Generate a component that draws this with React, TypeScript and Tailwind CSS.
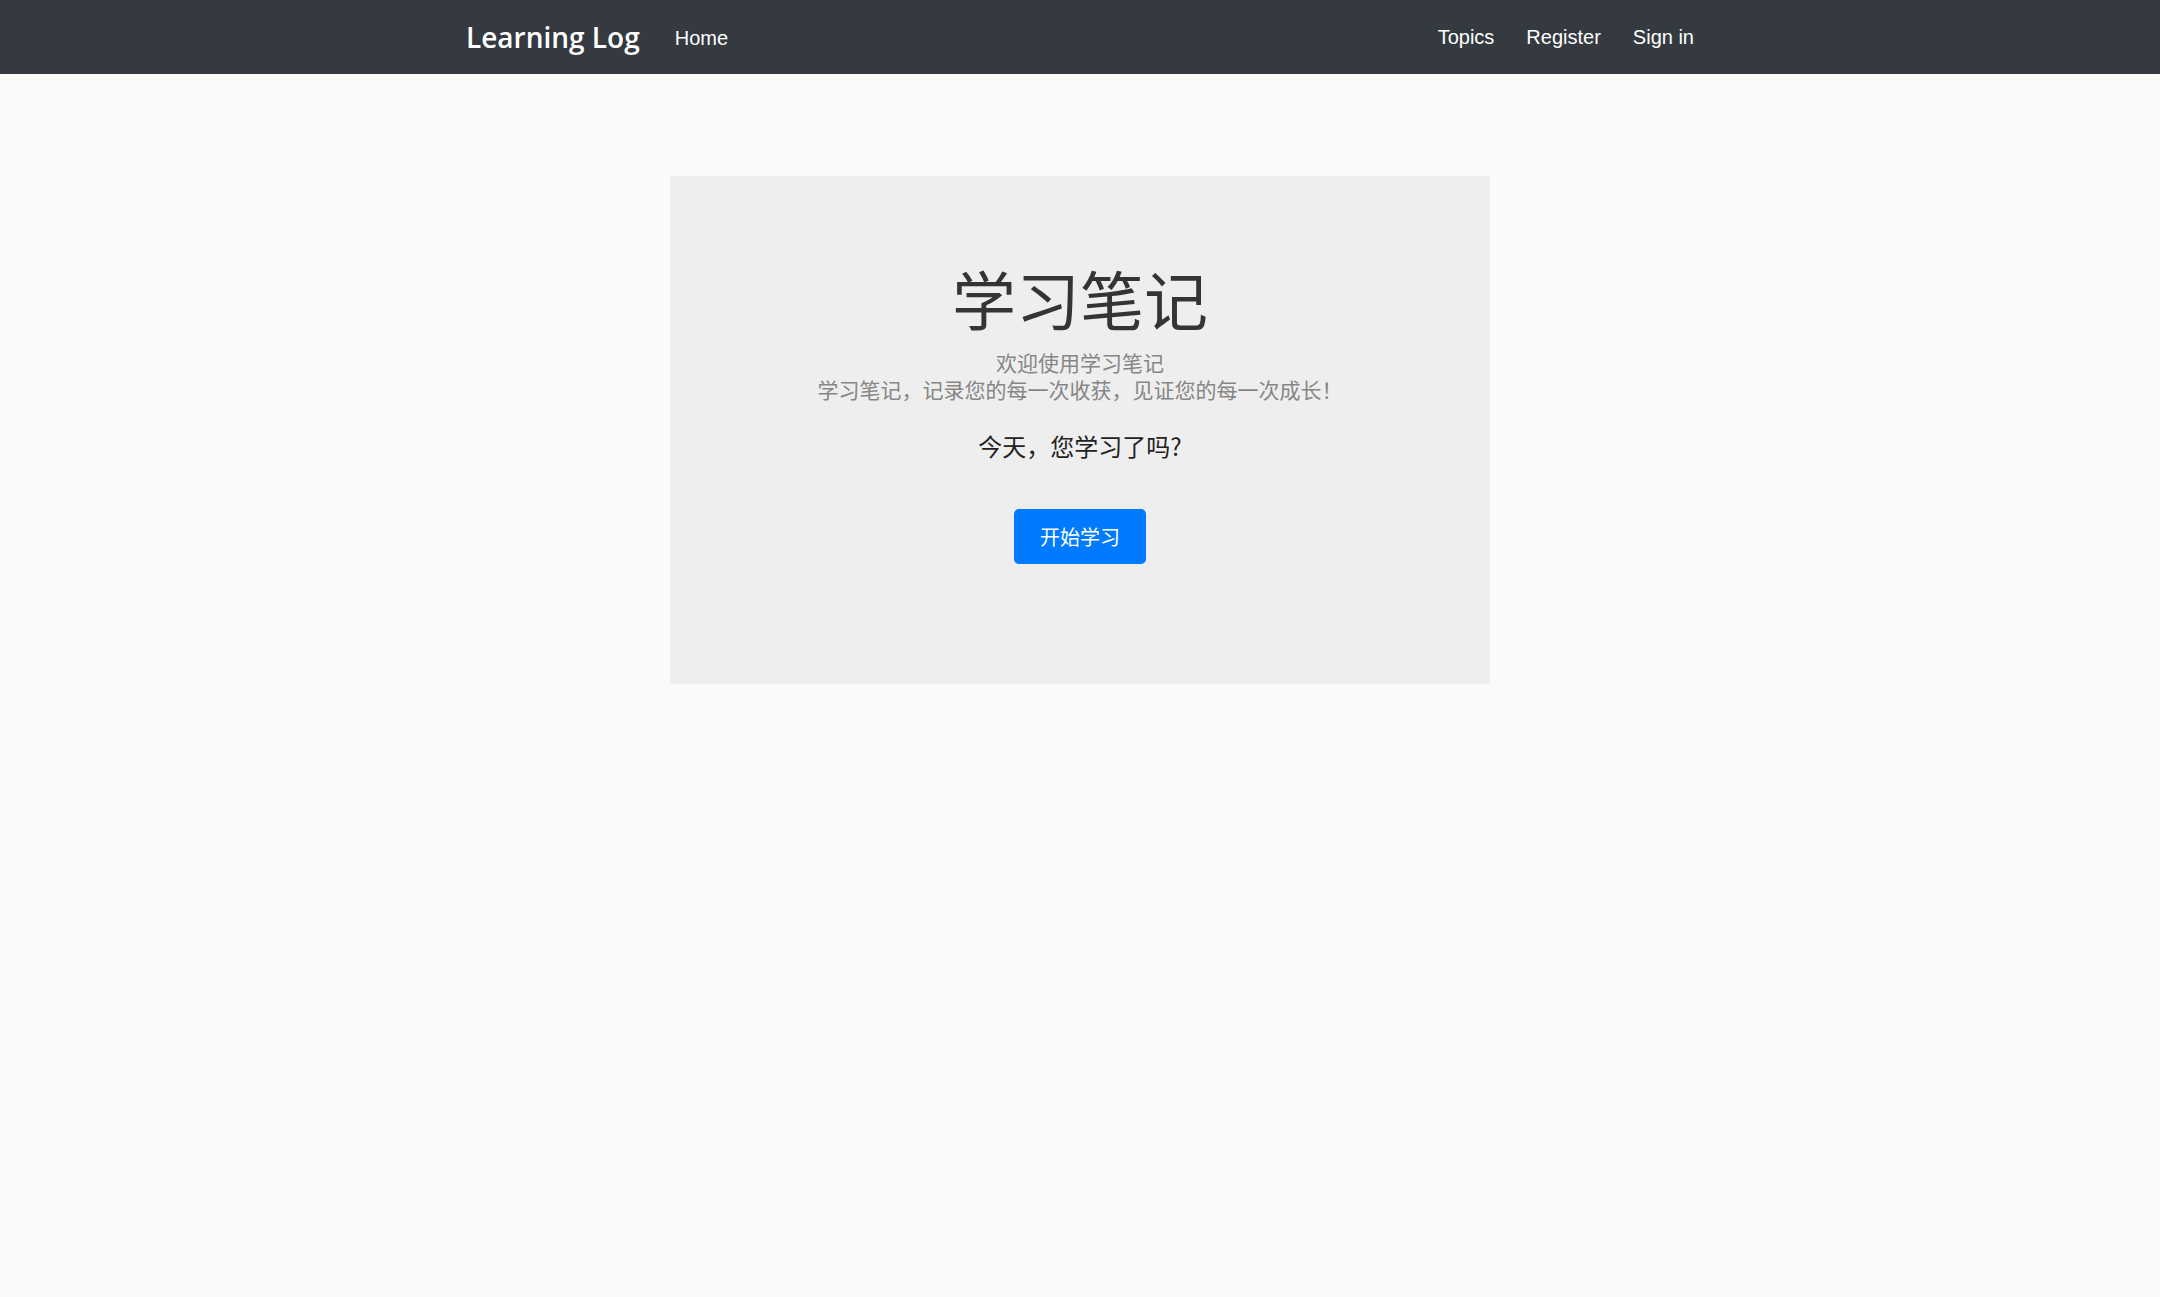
import React from "react";

export default function App() {
  const cjk = { fontFamily: '"Noto Sans CJK SC", "Liberation Sans", sans-serif' };
  return (
    <div className="min-h-[1297px] bg-[#fafafa]" style={{ fontFamily: '"Liberation Sans", Arial, sans-serif' }}>
      <nav className="h-[74px] bg-[#343a40]">
        <div className="mx-auto flex h-full w-[1228px] items-center justify-between">
          <div className="flex items-center gap-[35px]">
            <span className="text-[28px] font-semibold leading-none text-white" style={{ fontFamily: '"Open Sans", "Noto Sans", sans-serif' }}>
              Learning Log
            </span>
            <a className="pt-[2px] text-[20px] leading-none text-white">Home</a>
          </div>
          <div className="flex items-center gap-[32px] text-[20px] leading-none text-white">
            <a>Topics</a>
            <a>Register</a>
            <a>Sign in</a>
          </div>
        </div>
      </nav>
      <main className="pt-[102px]">
        <div className="mx-auto flex h-[508px] w-[820px] flex-col items-center bg-[#eeeeee] pt-[81px]" style={cjk}>
          <h1 className="text-[64px] font-normal leading-[80px] text-[#343434]">学习笔记</h1>
          <p className="mt-[12px] text-center text-[21px] leading-[27px] text-[#868686]">
            欢迎使用学习笔记
            <br />
            学习笔记，记录您的每一次收获，见证您的每一次成长！
          </p>
          <p className="mt-[27px] text-[24px] leading-[32px] text-[#222]">今天，您学习了吗?</p>
          <button className="mt-[47px] h-[55px] w-[132px] rounded-[5px] bg-[#007bff] text-[20px] text-white">
            开始学习
          </button>
        </div>
      </main>
    </div>
  );
}
